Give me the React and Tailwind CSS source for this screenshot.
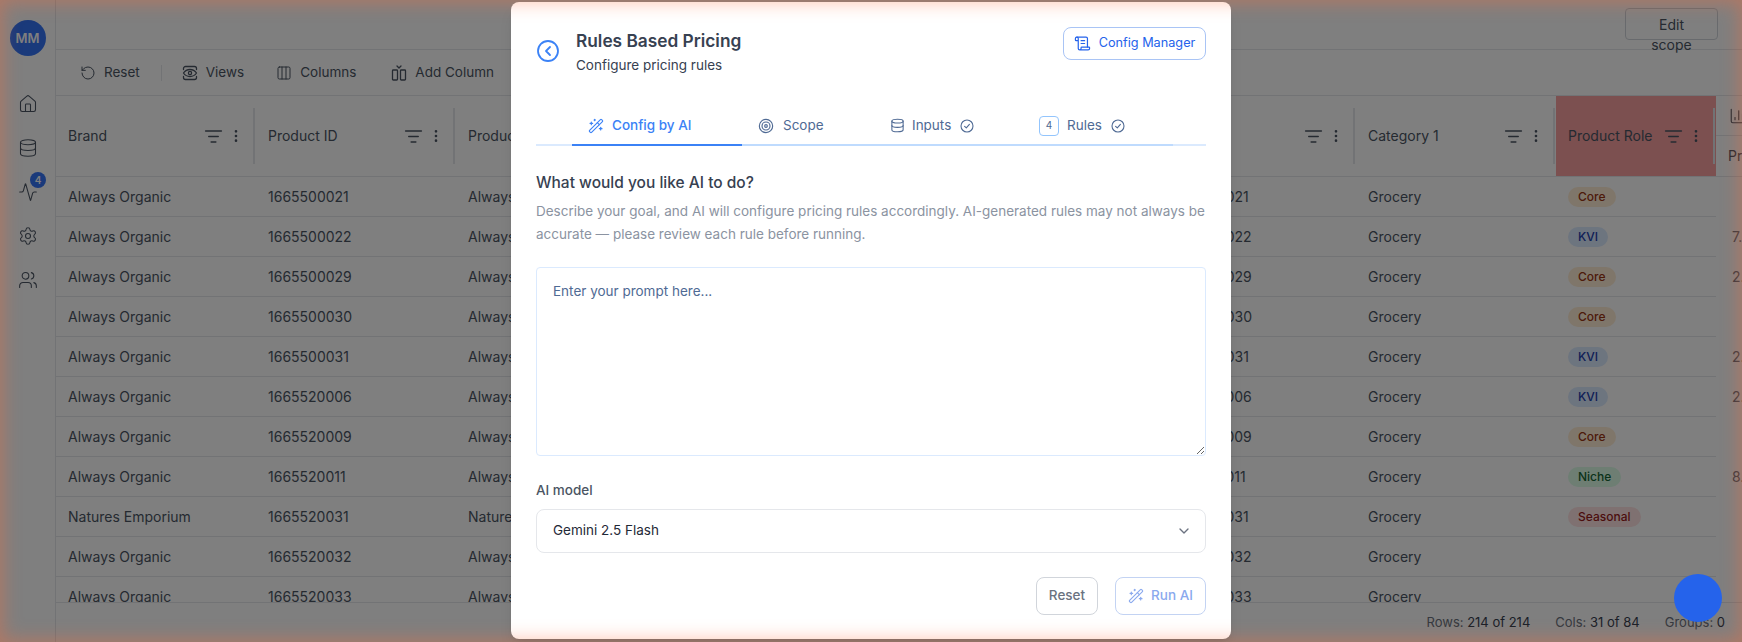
import React from "react";
import {
  ChartColumn,
  ChevronDown,
  CircleChevronLeft,
  Columns3,
  Database,
  EllipsisVertical,
  Activity,
  House,
  ListFilter,
  RotateCcw,
  ScrollText,
  Settings,
  Target,
  Users,
  WandSparkles,
} from "lucide-react";

const rows = [
  ["Always Organic", "1665500021", "Core", ""],
  ["Always Organic", "1665500022", "KVI", "7."],
  ["Always Organic", "1665500029", "Core", "2."],
  ["Always Organic", "1665500030", "Core", ""],
  ["Always Organic", "1665500031", "KVI", "2."],
  ["Always Organic", "1665520006", "KVI", "2."],
  ["Always Organic", "1665520009", "Core", ""],
  ["Always Organic", "1665520011", "Niche", "8."],
  ["Natures Emporium", "1665520031", "Seasonal", ""],
  ["Always Organic", "1665520032", "", ""],
  ["Always Organic", "1665520033", "", ""],
];

const pillStyles = {
  Core: "bg-[#ffedd5] text-[#9a3412]",
  KVI: "bg-[#dbeafe] text-[#1e40af]",
  Niche: "bg-[#dcfce7] text-[#166534]",
  Seasonal: "bg-[#fee2e2] text-[#991b1b]",
};

// Small eye-in-brackets icon used by the Views button
const ViewsIcon = () => (
  <svg width="16" height="16" viewBox="0 0 16 16" fill="none" stroke="currentColor" strokeWidth="1.3" strokeLinecap="round" strokeLinejoin="round">
    <path d="M1.5 4.5V3.5a2 2 0 0 1 2-2h9a2 2 0 0 1 2 2v1" />
    <path d="M1.5 11.5v1a2 2 0 0 0 2 2h9a2 2 0 0 0 2-2v-1" />
    <path d="M1.5 8c1.6-2.4 3.8-3.5 6.5-3.5s4.900 1.100 6.500 3.500c-1.600 2.400-3.800 3.500-6.500 3.500S3.100 10.400 1.500 8z" />
    <circle cx="8" cy="8" r="1.600" />
  </svg>
);

const AddColumnIcon = () => (
  <svg width="16" height="16" viewBox="0 0 16 16" fill="none" stroke="currentColor" strokeWidth="1.3" strokeLinecap="round" strokeLinejoin="round">
    <rect x="1.500" y="5" width="5" height="10" rx="0.800" />
    <rect x="9.500" y="5" width="5" height="10" rx="0.800" />
    <path d="M6 1l2 2 2-2" />
  </svg>
);

const CheckIcon = () => (
  <svg width="14" height="14" viewBox="0 0 14 14" fill="none" stroke="currentColor" strokeWidth="1.1" strokeLinecap="round" strokeLinejoin="round" className="ml-[9px]">
    <circle cx="7" cy="7" r="6" />
    <path d="M4.600 7.300l1.700 1.600 3.100-3.500" />
  </svg>
);

const SideIcon = ({ children, badge }) => (
  <div className="relative flex h-11 w-full items-center justify-center text-[#4b5563]">
    {children}
    {badge && (
      <span className="absolute left-[30px] top-[2px] flex h-4 w-4 items-center justify-center rounded-full bg-[#3474f6] text-[10px] font-semibold text-white">
        {badge}
      </span>
    )}
  </div>
);

const ToolButton = ({ icon, label, className = "" }) => (
  <div className={`flex items-center gap-2 text-[#4b5563] ${className}`}>
    {icon}
    <span>{label}</span>
  </div>
);

const HeaderCell = ({ label, className, sep = true }) => (
  <div className={`relative flex h-full shrink-0 items-center justify-between pl-3 text-[#4b5563] ${className}`}>
    <span className="whitespace-nowrap">{label}</span>
    <div className="flex items-center gap-[5px] pr-3">
      <ListFilter size={19} strokeWidth={1.8} />
      <EllipsisVertical size={16} strokeWidth={2} />
    </div>
    {sep && <span className="absolute right-[1px] top-3 h-[56px] w-[2px] bg-[#e5e7eb]" />}
  </div>
);

const Cell = ({ className, children }) => (
  <div className={`flex h-full shrink-0 items-center whitespace-nowrap pl-3 ${className}`}>{children}</div>
);

const Table = () => (
  <div className="min-h-0 flex-1 overflow-hidden text-sm">
    <div className="flex h-[81px] w-[1800px] border-b border-[#e5e7eb]">
      <HeaderCell label="Brand" className="w-[200px]" />
      <HeaderCell label="Product ID" className="w-[200px]" />
      <HeaderCell label="Product Name" className="w-[200px]" />
      <HeaderCell label="Size" className="w-[200px]" />
      <HeaderCell label="Unit" className="w-[200px]" />
      <HeaderCell label="Pack" className="w-[100px]" />
      <HeaderCell label="Parent" className="w-[200px]" />
      <HeaderCell label="Category 1" className="w-[200px]" />
      <HeaderCell label="Product Role" className="w-[160px] bg-[#f8a0a0]" />
      <div className="flex h-full w-[100px] flex-col text-[#4b5563]">
        <div className="flex h-10 items-center border-b border-[#e5e7eb] pl-[13px]">
          <ChartColumn size={18} strokeWidth={1.5} />
        </div>
        <div className="flex flex-1 items-center pl-3">Price</div>
      </div>
    </div>
    {rows.map((row) => (
      <div key={row[1]} className="flex h-10 w-[1800px] text-[#4b5563]">
        <div className="flex h-full border-b border-[#e5e7eb]">
          <Cell className="w-[200px]">{row[0]}</Cell>
          <Cell className="w-[200px]">{row[1]}</Cell>
          <Cell className="w-[200px]">{row[0]}</Cell>
          <Cell className="w-[500px]" />
          <Cell className="w-[200px]">{row[1]}</Cell>
          <Cell className="w-[200px]">Grocery</Cell>
          <Cell className="w-[160px]">
            {row[2] && (
              <span className={`rounded-full px-[10px] py-[2px] text-xs font-medium leading-4 ${pillStyles[row[2]]}`}>
                {row[2]}
              </span>
            )}
          </Cell>
        </div>
        <div className="flex h-full items-center pl-4 text-[#6b7280]">{row[3]}</div>
      </div>
    ))}
  </div>
);

const Tab = ({ icon, label, after, active, className }) => (
  <div
    className={`flex h-[38px] items-center border-b-2 pb-[1px] pl-4 ${
      active ? "border-[#3b82f6] font-medium text-[#3b82f6]" : "border-[#bfdbfe] text-[#4f6a94]"
    } ${className}`}
  >
    {icon}
    <span>{label}</span>
    {after}
  </div>
);

const Modal = () => (
  <div className="absolute left-[511px] top-[2px] flex h-[637px] w-[720px] flex-col rounded-lg bg-white px-[25px] pt-[25px] shadow-lg">
    <div className="flex items-start justify-between">
      <div className="flex items-center gap-[16px]">
        <CircleChevronLeft size={24} strokeWidth={1.8} className="text-[#3b82f6]" />
        <div>
          <h2 className="text-[17.300px] font-semibold leading-7 text-[#374151]">Rules Based Pricing</h2>
          <p className="text-[13.500px] leading-5 text-[#374151]">Configure pricing rules</p>
        </div>
      </div>
      <div className="flex h-[33px] w-[143px] items-center justify-center gap-[8px] rounded-lg border border-[#a9c4f5] text-[12.700px] text-[#2563eb]">
        <ScrollText size={17} strokeWidth={1.7} />
        <span>Config Manager</span>
      </div>
    </div>

    <div className="mt-[33px] border-b-2 border-[#dbeafe] text-[13.500px]">
      <div className="-mb-[2px] ml-9 flex">
        <Tab
          active
          className="w-[170px]"
          label="Config by AI"
          icon={<WandSparkles size={16} strokeWidth={1.7} className="mr-[8px]" />}
        />
        <Tab
          className="w-[132px]"
          label="Scope"
          icon={<Target size={16} strokeWidth={1.7} className="mr-[9px]" />}
        />
        <Tab
          className="w-[149px]"
          label="Inputs"
          icon={<Database size={15} strokeWidth={1.7} className="mr-[7px]" />}
          after={<CheckIcon />}
        />
        <Tab
          className="w-[150px]"
          label="Rules"
          icon={
            <span className="mr-[8px] flex h-[20px] w-[20px] items-center justify-center rounded border border-[#93c5fd] text-[10px]">
              4
            </span>
          }
          after={<CheckIcon />}
        />
      </div>
    </div>

    <h3 className="mt-[25px] text-[15.500px] font-medium leading-6 text-[#374151]">What would you like AI to do?</h3>
    <p className="mt-[5px] text-[13.500px] leading-[23px] text-[#8b93a1]">
      Describe your goal, and AI will configure pricing rules accordingly. AI-generated rules may not always be
      accurate — please review each rule before running.
    </p>

    <textarea
      placeholder="Enter your prompt here..."
      className="mt-[21px] h-[189px] w-full rounded-[4px] border border-[#dbeafe] px-4 py-[13px] text-[13.500px] leading-5 outline-none placeholder:text-[#4f6a94]"
    />

    <label className="mt-[24px] text-[13.500px] font-medium leading-5 text-[#4b5563]">AI model</label>
    <div className="mt-[9px] flex h-[44px] items-center justify-between rounded-lg border border-[#e5e7eb] pl-4 pr-[13px] text-[13.500px] text-[#1f2937]">
      <span>Gemini 2.5 Flash</span>
      <ChevronDown size={16} className="text-[#6b7280]" />
    </div>

    <div className="mt-[24px] flex justify-end gap-[17px] text-[13.500px]">
      <div className="flex h-[38px] w-[62px] items-center justify-center rounded-lg border border-[#d1d5db] font-medium text-[#6b7280]">
        Reset
      </div>
      <div className="flex h-[38px] w-[91px] items-center justify-center gap-[7px] rounded-lg border border-[#c3d3f3] font-medium text-[#8aa9ee]">
        <WandSparkles size={16} strokeWidth={1.7} />
        <span>Run AI</span>
      </div>
    </div>
  </div>
);

export default function App() {
  return (
    <div className="relative flex h-[642px] w-full overflow-hidden bg-white font-['Inter',sans-serif] text-sm">
      <aside className="flex w-14 shrink-0 flex-col items-center border-r border-[#e5e7eb]">
        <div className="mt-[20px] flex h-9 w-9 items-center justify-center rounded-full bg-[#3474f6] text-[13px] font-semibold text-white">
          MM
        </div>
        <div className="mt-[26px] flex w-full flex-col">
          <SideIcon><House size={20} strokeWidth={1.3} /></SideIcon>
          <SideIcon><Database size={20} strokeWidth={1.3} /></SideIcon>
          <SideIcon badge="4"><Activity size={20} strokeWidth={1.3} /></SideIcon>
          <SideIcon><Settings size={20} strokeWidth={1.3} /></SideIcon>
          <SideIcon><Users size={20} strokeWidth={1.3} /></SideIcon>
        </div>
      </aside>

      <main className="flex min-w-0 flex-1 flex-col">
        <div className="flex h-[50px] shrink-0 justify-end border-b border-[#e5e7eb] pr-[24px] pt-2">
          <div className="h-8 w-[93px] rounded border border-[#d1d5db] px-[24px] pt-[6px] text-center leading-5 text-[#4b5563]">
            Edit scope
          </div>
        </div>
        <div className="flex h-[46px] shrink-0 items-center border-b border-[#e5e7eb] pl-6 text-[13.500px]">
          <ToolButton icon={<RotateCcw size={16} strokeWidth={1.5} />} label="Reset" />
          <span className="ml-[21px] h-4 w-px bg-[#e5e7eb]" />
          <ToolButton className="ml-[20px]" icon={<ViewsIcon />} label="Views" />
          <ToolButton className="ml-[32px]" icon={<Columns3 size={16} strokeWidth={1.5} />} label="Columns" />
          <ToolButton className="ml-[35px]" icon={<AddColumnIcon />} label="Add Column" />
        </div>
        <Table />
        <div className="flex h-10 shrink-0 items-center justify-end gap-[25px] border-t border-[#e5e7eb] pr-[17px] text-[13px] text-[#6b7280]">
          <span>Rows: <span className="text-[#374151]">214 of 214</span></span>
          <span>Cols: <span className="text-[#374151]">31 of 84</span></span>
          <span>Groups: <span className="text-[#374151]">0</span></span>
        </div>
      </main>

      {/* dimmed backdrop */}
      <div className="absolute inset-0 bg-black/50" />
      <Modal />
      {/* edge glow sits over everything */}
      <div className="pointer-events-none absolute inset-0 shadow-[inset_0_0_18px_3px_rgba(255,110,60,0.38)]" />
      <div className="absolute bottom-[20px] right-[20px] h-12 w-12 rounded-full bg-[#2563eb]" />
    </div>
  );
}
